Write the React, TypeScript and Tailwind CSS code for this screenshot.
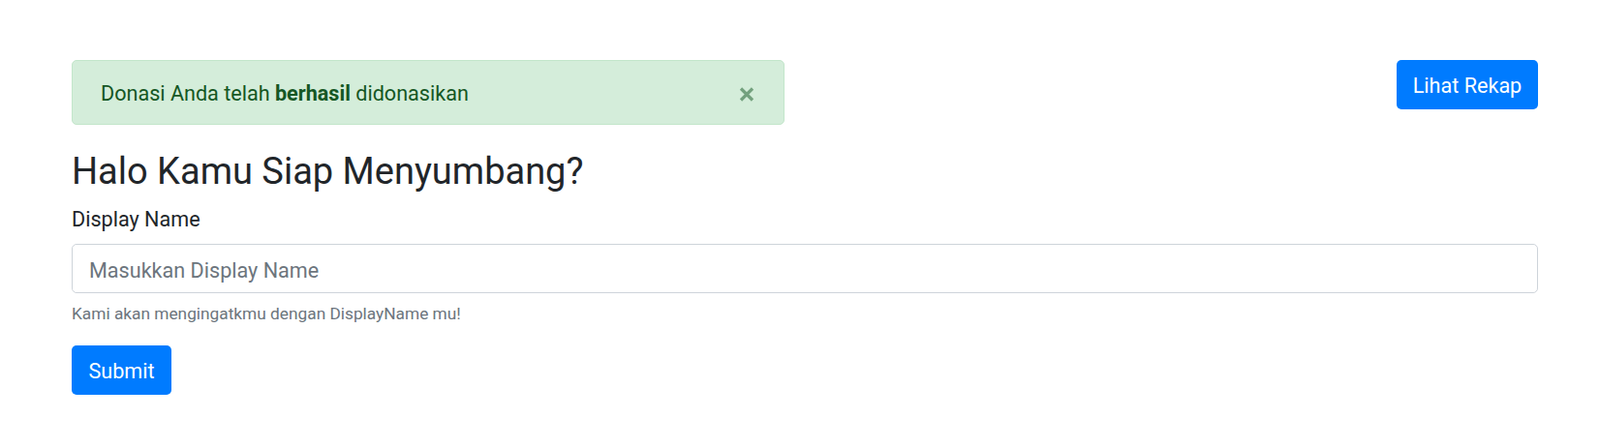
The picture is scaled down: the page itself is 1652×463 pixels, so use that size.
export default function App() {
  return (
    <div className="min-h-[463px] bg-white font-['Roboto',sans-serif] text-[#212529]">
      <div className="ml-[74px] w-[1514px] pt-[62px]">
        {/* Alert + recap button */}
        <div className="flex items-start justify-between">
          <div className="flex h-[67px] w-[736px] items-center justify-between rounded-[5px] border border-[#c3e6cb] bg-[#d4edda] pl-[29px] pr-[30px] text-[21.6px] text-[#155724]">
            <p className="pt-[4px]">
              Donasi Anda telah <strong className="font-bold text-[#155724]">berhasil</strong> didonasikan
            </p>
            <button type="button" aria-label="Close" className="mt-[3px] opacity-50">
              <svg width="16" height="15" viewBox="0 0 16 15">
                <path d="M2 1.5 L14 13.5 M14 1.5 L2 13.5" stroke="#155724" strokeWidth="3.2" strokeLinecap="butt" />
              </svg>
            </button>
          </div>
          <button
            type="button"
            className="h-[51px] w-[146px] rounded-[5px] bg-[#007bff] pt-[3px] text-[21.6px] text-white"
          >
            Lihat Rekap
          </button>
        </div>

        {/* Heading */}
        <h2 className="mt-[26px] text-[38px] leading-[1.2] font-normal">Halo Kamu Siap Menyumbang?</h2>

        {/* Form */}
        <form className="mt-[9px]">
          <label className="block pt-[1px] text-[21.6px] leading-[1.5]">Display Name</label>
          <input
            type="text"
            placeholder="Masukkan Display Name"
            className="mt-[9px] h-[51px] w-full rounded-[5px] border border-[#ced4da] px-[17px] pt-[4px] text-[21.6px] placeholder:text-[#6c757d] outline-none"
          />
          <p className="mt-[9px] text-[17.3px] leading-[1.5] text-[#6c757d]">
            Kami akan mengingatkmu dengan DisplayName mu!
          </p>
          <button
            type="button"
            className="mt-[19px] h-[51px] w-[103px] rounded-[5px] bg-[#007bff] pt-[3px] text-[21.6px] text-white"
          >
            Submit
          </button>
        </form>
      </div>
    </div>
  );
}
